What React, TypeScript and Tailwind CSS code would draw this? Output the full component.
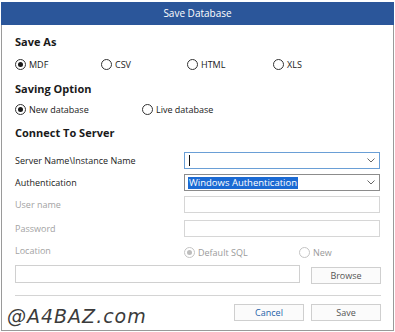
import { ReactNode } from 'react';

const font = { fontFamily: '"Open Sans", "Noto Sans", sans-serif' };

type RadioProps = {
  label: string;
  checked?: boolean;
  disabled?: boolean;
};

const Radio = ({ label, checked, disabled }: RadioProps) => {
  return (
    <div className="flex items-center gap-[3px]">
      <span
        className={`flex h-[11px] w-[11px] items-center justify-center rounded-full border ${
          disabled ? 'border-[#c4c4c4]' : 'border-[#333]'
        }`}
      >
        {checked && (
          <span
            className={`h-[5px] w-[5px] rounded-full ${disabled ? 'bg-[#bdbdbd]' : 'bg-[#1a1a1a]'}`}
          />
        )}
      </span>
      <span className={`text-[9px] leading-none ${disabled ? 'text-[#9a9a9a]' : 'text-[#1a1a1a]'}`}>
        {label}
      </span>
    </div>
  );
};

const Heading = ({ children, className }: { children: ReactNode; className: string }) => (
  <div className={`flex h-4 items-center text-[11px] font-bold text-[#1a1a1a] ${className}`}>{children}</div>
);

const Chevron = () => (
  <svg width="8" height="5" viewBox="0 0 8 5" className="mr-[4px]">
    <path d="M0.5 0.5 L4 4 L7.5 0.5" fill="none" stroke="#666" strokeWidth="1" />
  </svg>
);

const FieldRow = ({
  label,
  disabled,
  className,
  children,
}: {
  label: string;
  disabled?: boolean;
  className: string;
  children: ReactNode;
}) => (
  <div className={`flex items-center ${className}`}>
    <div className={`w-[169px] text-[9px] leading-none ${disabled ? 'text-[#a3a3a3]' : 'text-[#1a1a1a]'}`}>
      {label}
    </div>
    {children}
  </div>
);

export default function App() {
  return (
    <div className="h-[332px] w-[395px] bg-white pt-[2px] pl-[1px]" style={font}>
      <div className="relative h-[329px] w-[393px] border-x border-b border-[#9a9a9a] bg-white">
        <div className="-mx-px flex h-[23px] items-center justify-center bg-[#2b569a] text-[10px] text-white">
          Save Database
        </div>

        <div className="pl-[13px] pr-[12px]">
          <Heading className="mt-[9px]">Save As</Heading>
          <div className="mt-[6px] flex h-4 items-center">
            <div className="w-[86px]">
              <Radio label="MDF" checked />
            </div>
            <div className="w-[86px]">
              <Radio label="CSV" />
            </div>
            <div className="w-[86px]">
              <Radio label="HTML" />
            </div>
            <div className="w-[86px]">
              <Radio label="XLS" />
            </div>
          </div>

          <Heading className="mt-[9px]">Saving Option</Heading>
          <div className="mt-[4px] flex h-4 items-center">
            <div className="w-[127px]">
              <Radio label="New database" checked />
            </div>
            <Radio label="Live database" />
          </div>

          <Heading className="mt-[8px]">Connect To Server</Heading>

          <FieldRow label="Server Name\Instance Name" className="mt-[11px]">
            <div className="flex h-[17px] w-[196px] items-center justify-between border border-[#6a9fd6] bg-white">
              <span className="ml-[4px] h-[11px] w-px bg-[#111]" />
              <Chevron />
            </div>
          </FieldRow>

          <FieldRow label="Authentication" className="mt-[5px]">
            <div className="flex h-[17px] w-[196px] items-center justify-between border border-[#8c8c8c] bg-white">
              <span className="ml-[3px] bg-[#1b6ad3] px-px text-[9.5px] leading-[12px] text-white">
                Windows Authentication
              </span>
              <Chevron />
            </div>
          </FieldRow>

          <FieldRow label="User name" disabled className="mt-[5px]">
            <div className="h-[17px] w-[196px] border border-[#d6d6d6] bg-white" />
          </FieldRow>

          <FieldRow label="Password" disabled className="mt-[7px]">
            <div className="h-[17px] w-[196px] border border-[#d6d6d6] bg-white" />
          </FieldRow>

          <FieldRow label="Location" disabled className="mt-[5px] h-4">
            <div className="flex w-[196px] items-center pt-[5px]">
              <div className="w-[115px]">
                <Radio label="Default SQL" checked disabled />
              </div>
              <Radio label="New" disabled />
            </div>
          </FieldRow>

          <div className="mt-[7px] flex items-start justify-between">
            <div className="h-[18px] w-[285px] border border-[#d0d0d0] bg-white" />
            <button className="mt-[2px] flex h-[17px] w-[70px] items-center justify-center border border-[#cfcfcf] bg-[#fbfbfb] text-[9px] text-[#555]">
              Browse
            </button>
          </div>

          <div className="mt-[11px] h-px w-[366px] bg-[#d4d4d4]" />

          <div className="mt-[8px] flex justify-end gap-[7px]">
            <button className="flex h-[17px] w-[70px] items-center justify-center border border-[#cfcfcf] bg-[#fbfbfb] text-[9px] text-[#2461a8]">
              Cancel
            </button>
            <button className="flex h-[17px] w-[70px] items-center justify-center border border-[#cfcfcf] bg-[#fbfbfb] text-[9px] text-[#555]">
              Save
            </button>
          </div>
        </div>

        <div
          className="absolute bottom-[4px] left-[5px] text-[19px] italic leading-none tracking-[1px] text-[#3b3b3b]"
          style={{ fontFamily: '"DejaVu Sans", sans-serif' }}
        >
          @A4BAZ.com
        </div>
      </div>
    </div>
  );
}
